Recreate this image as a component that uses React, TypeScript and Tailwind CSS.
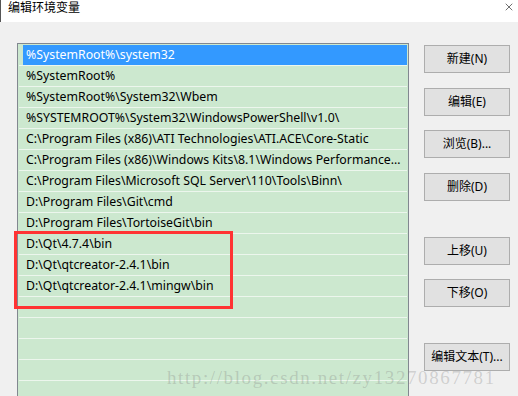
import { X } from 'lucide-react';

const paths = [
  '%SystemRoot%\\system32',
  '%SystemRoot%',
  '%SystemRoot%\\System32\\Wbem',
  '%SYSTEMROOT%\\System32\\WindowsPowerShell\\v1.0\\',
  'C:\\Program Files (x86)\\ATI Technologies\\ATI.ACE\\Core-Static',
  'C:\\Program Files (x86)\\Windows Kits\\8.1\\Windows Performance Toolkit\\',
  'C:\\Program Files\\Microsoft SQL Server\\110\\Tools\\Binn\\',
  'D:\\Program Files\\Git\\cmd',
  'D:\\Program Files\\TortoiseGit\\bin',
  'D:\\Qt\\4.7.4\\bin',
  'D:\\Qt\\qtcreator-2.4.1\\bin',
  'D:\\Qt\\qtcreator-2.4.1\\mingw\\bin',
  '',
  '',
  '',
  '',
  '',
];

const font = { fontFamily: '"Noto Sans", "Noto Sans CJK SC", sans-serif' };

function Btn({ label, className = '' }: { label: string; className?: string }) {
  return (
    <button
      className={`w-[86px] h-[28px] bg-[#e1e1e1] border border-[#adadad] text-[12px] text-black flex items-center justify-center ${className}`}
    >
      {label}
    </button>
  );
}

export default function App() {
  return (
    <div
      className="relative w-[518px] h-[396px] overflow-hidden bg-[#f0f0f0] text-black"
      style={font}
    >
      {/* title bar */}
      <div className="h-[22px] bg-white border-l border-[#555] flex items-start justify-between">
        <span className="pl-[7px] text-[12px] leading-[15px]">编辑环境变量</span>
        <X className="w-[12px] h-[12px] mr-[3px] mt-[1px] text-[#222]" strokeWidth={1.3} />
      </div>

      <div className="flex pl-[17px] pt-[21px]">
        {/* list */}
        <div className="w-[392px] h-[360px] border border-[#828790] bg-[#cce8cf] pt-[1px] pl-[1px] pr-[1px]">
          {paths.map((p, i) => (
            <div key={i} className="h-[21px] border-b border-[#ecf6ed] pl-[4px]">
              <div
                className={`h-[20px] pl-[3px] pr-[4px] text-[12.3px] leading-[20px] whitespace-nowrap overflow-hidden text-ellipsis ${
                  i === 0 ? 'bg-[#3399ff] text-white' : ''
                }`}
              >
                {p}
              </div>
            </div>
          ))}
        </div>

        {/* buttons */}
        <div className="flex flex-col ml-[15px] pt-[2px]">
          <Btn label="新建(N)" />
          <Btn label="编辑(E)" className="mt-[15px]" />
          <Btn label="浏览(B)..." className="mt-[14px]" />
          <Btn label="删除(D)" className="mt-[15px]" />
          <Btn label="上移(U)" className="mt-[36px]" />
          <Btn label="下移(O)" className="mt-[14px]" />
          <Btn label="编辑文本(T)..." className="mt-[36px]" />
        </div>
      </div>

      {/* red highlight box */}
      <div className="absolute left-[14px] top-[231px] w-[219px] h-[78px] border-[3px] border-[#f33]" />

      {/* watermark */}
      <div
        className="absolute left-[167px] top-[364px] text-[19px] tracking-[1.6px] text-[#808080]/30 whitespace-nowrap pointer-events-none"
        style={{ fontFamily: '"Liberation Serif", serif' }}
      >
        http://blog.csdn.net/zy13270867781
      </div>
    </div>
  );
}
